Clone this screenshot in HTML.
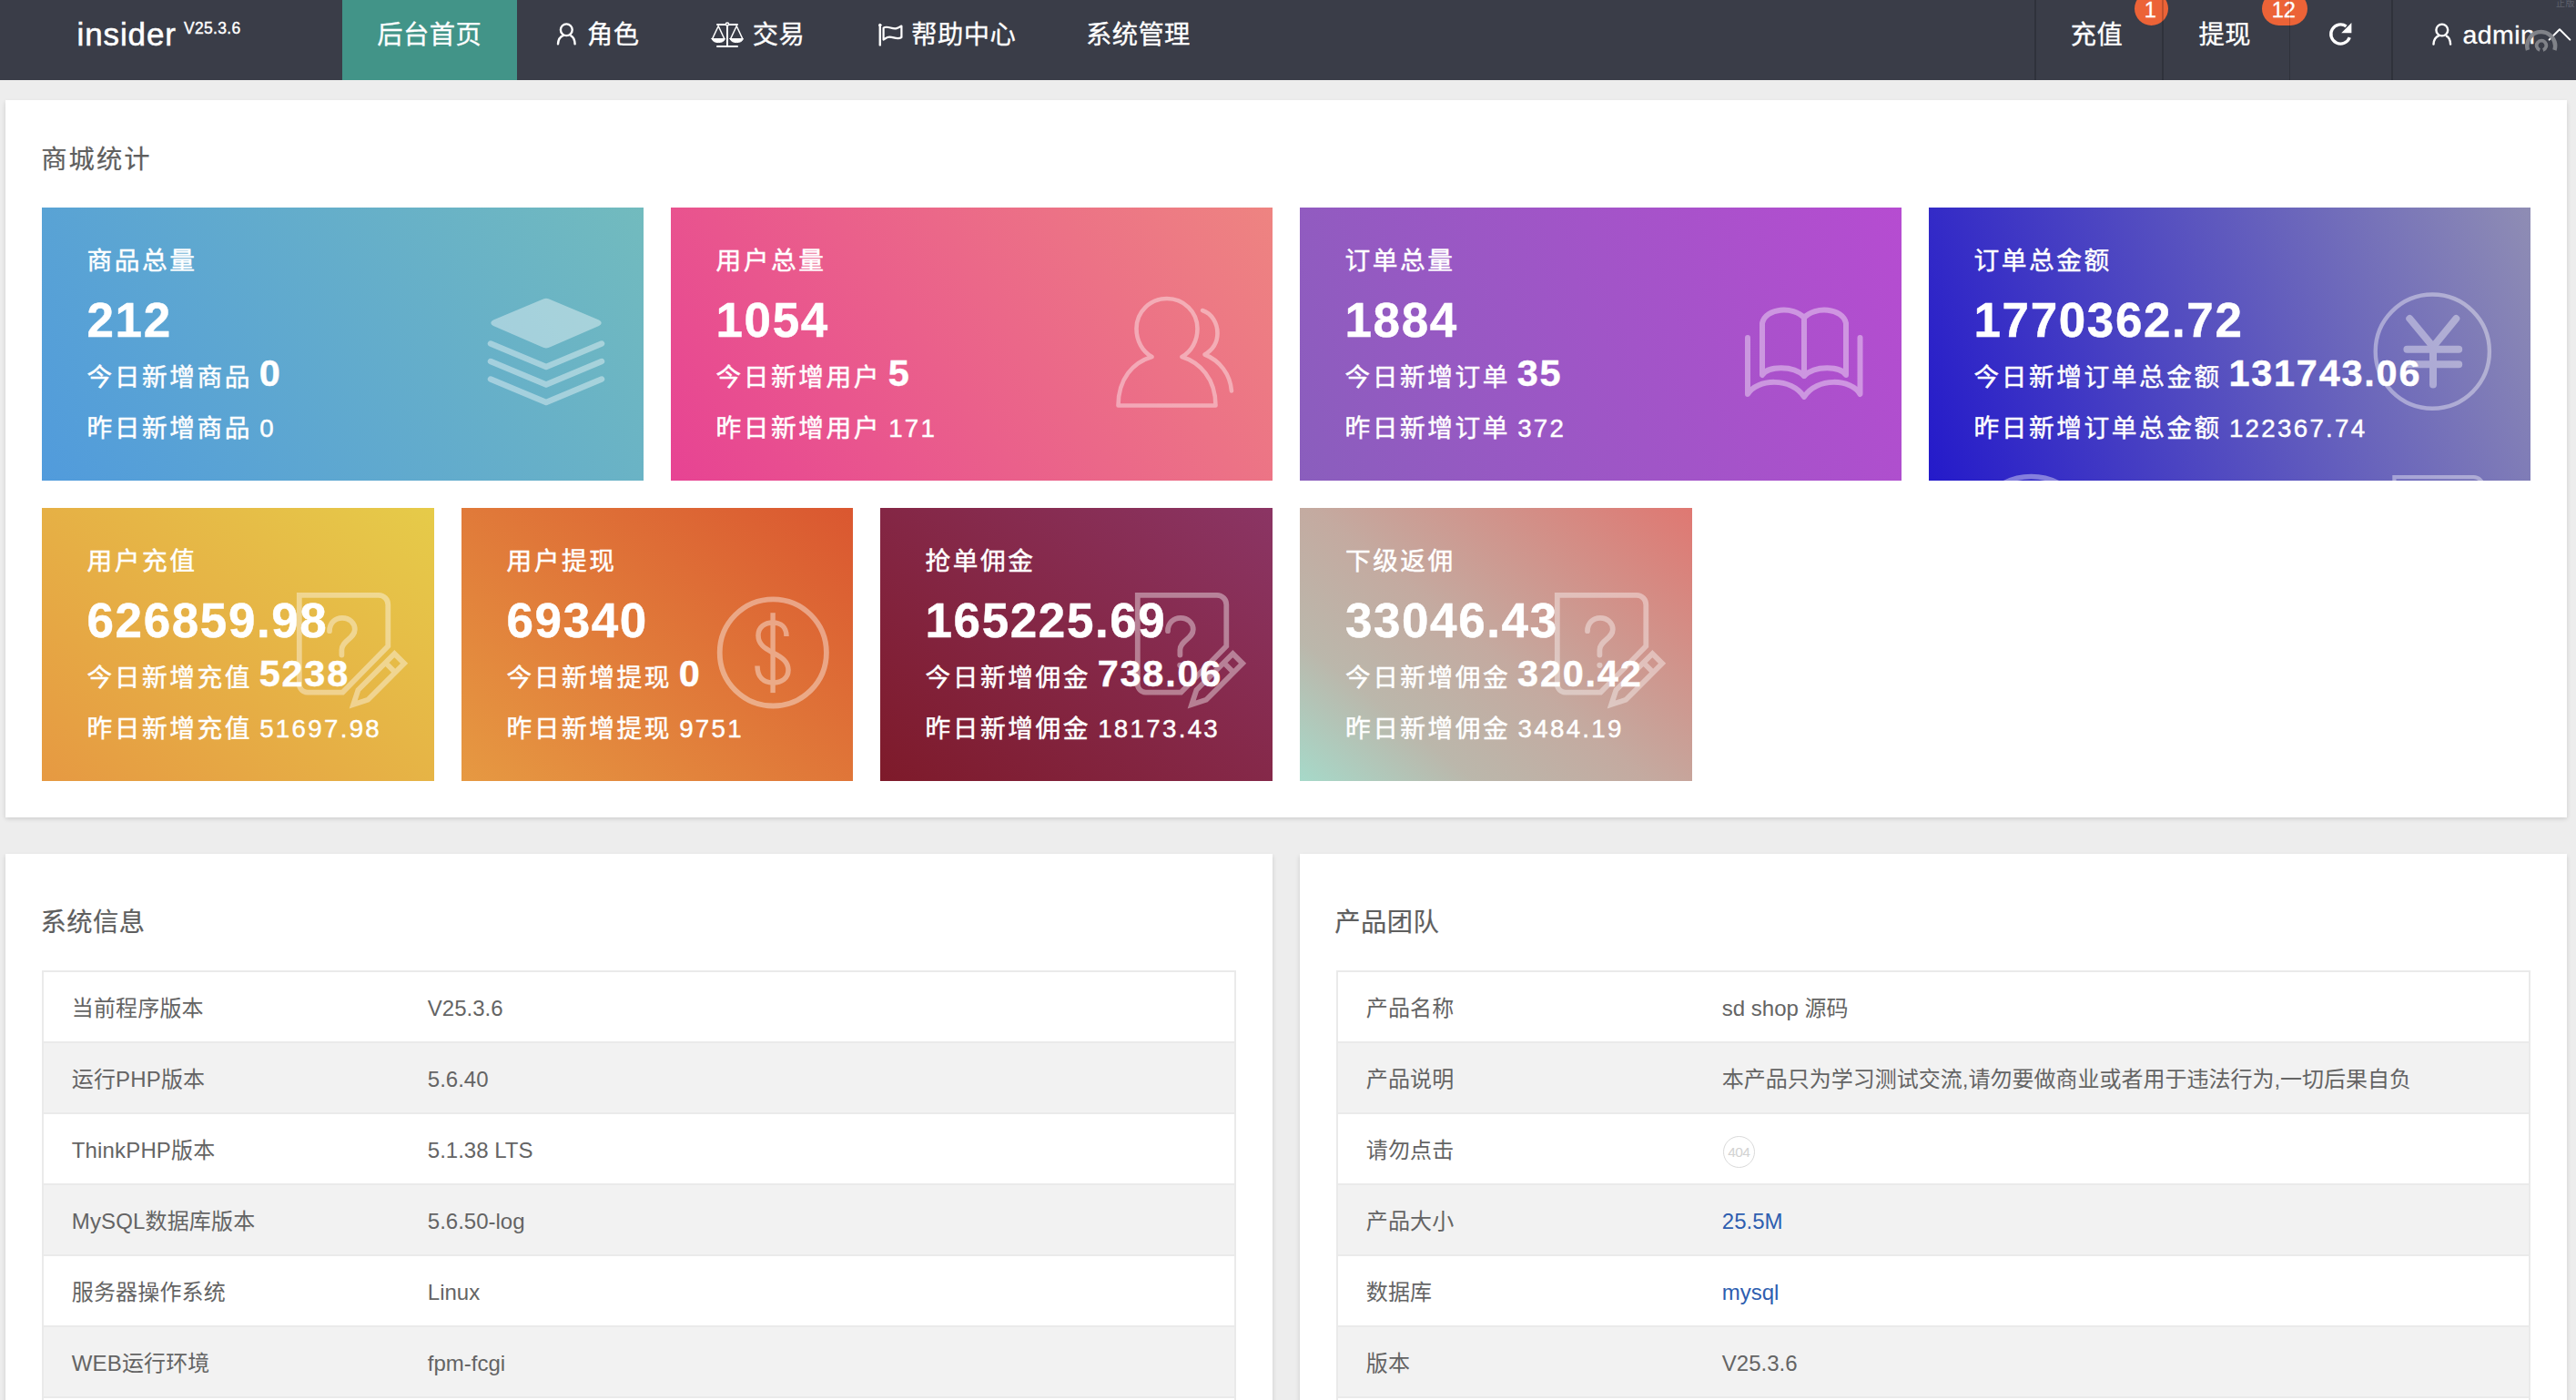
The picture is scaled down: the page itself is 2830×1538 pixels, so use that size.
<!DOCTYPE html>
<html lang="zh-CN">
<head>
<meta charset="utf-8">
<title>insider 后台首页</title>
<style>
*{box-sizing:border-box;margin:0;padding:0}
html,body{width:2830px;height:1538px;overflow:hidden;background:#ededed}
body{position:relative;font-family:"Liberation Sans","Noto Sans CJK SC",sans-serif;color:#5a5a5a}
#hd{position:absolute;left:0;top:0;width:2830px;height:87.5px;background:#3a3d48;overflow:hidden}
#hd .t{position:absolute;white-space:nowrap;color:#fff;-webkit-text-stroke:.3px #fff;font-size:28.3px;letter-spacing:.4px;line-height:40px;top:18.3px}
#hd .act{position:absolute;left:375.75px;top:0;width:192.25px;height:87.5px;background:#429488}
#hd .dv{position:absolute;top:0;width:1.6px;height:87.5px;background:rgba(0,0,0,.18);z-index:3}
#hd .bdg{position:absolute;top:-8.7px;height:37px;border-radius:18.5px;background:#ec6337;color:#fff;font-size:23.6px;line-height:40.6px;text-align:center;-webkit-text-stroke:.3px #fff;padding-right:2.4px}
#hd svg{position:absolute;left:0;top:0;overflow:visible}
.pn{position:absolute;background:#fff;box-shadow:0 1.5px 5px rgba(0,0,0,.14)}
.ttl{position:absolute;white-space:nowrap;font-size:28.3px;letter-spacing:.4px;line-height:40px;color:#5e5e5e;-webkit-text-stroke:.2px #5e5e5e}
.cd{position:absolute;height:299.5px;overflow:hidden;color:#fff;-webkit-text-stroke:.45px #fff}
.cd .l{position:absolute;left:49.5px;white-space:nowrap;font-size:27.7px;letter-spacing:2.55px;line-height:40px}
.cd .l1{top:39px}
.cd .l2{top:94px;font-size:53px;line-height:60px;font-weight:bold;letter-spacing:1.6px}
.cd .l3{top:161.7px;word-spacing:-2.5px}
.cd .l3 b{font-size:41.4px;letter-spacing:1.8px;line-height:40px}
.cd .l4{top:222.7px;word-spacing:-2px}
.cd .l4 i{font-style:normal;letter-spacing:2.3px}
.cd svg{position:absolute;left:0;top:0;overflow:visible}
.tb{position:absolute;border:2px solid #eaeaea;border-bottom:none;overflow:hidden}
.tb .r{position:absolute;left:0;width:100%;height:78px;border-bottom:2px solid #eaeaea;font-size:24px;letter-spacing:.15px;line-height:79.2px;color:#646464}
.tb .r.g{background:#f2f2f2}
.tb .r span{position:absolute;top:0;white-space:nowrap}
.tb .r .k{left:30.6px}
.tb .r .v{left:421.6px;letter-spacing:0}
.tb .r .v.a{color:#2e5eb0}
.c404{position:absolute;left:422.6px;top:23.8px;width:35px;height:35px;border:1px solid #dadada;border-radius:50%;font-size:15.5px;line-height:34.6px;text-align:center;color:#d2d2d2;letter-spacing:-.6px;-webkit-text-stroke:0}
</style>
</head>
<body>

<div id="hd">
  <div class="act"></div>
  <div class="t" id="logo" style="left:84.5px;font-size:35px;letter-spacing:.9px;top:17.5px;-webkit-text-stroke:.55px #fff">insider</div>
  <div class="t" id="ver" style="left:202px;font-size:17.5px;letter-spacing:.3px;top:11.3px;-webkit-text-stroke:.4px #fff">V25.3.6</div>
  <div class="t" id="n1" style="left:414.3px">后台首页</div>
  <div class="t" id="n2" style="left:645px">角色</div>
  <div class="t" id="n3" style="left:826.8px">交易</div>
  <div class="t" id="n4" style="left:1001.3px">帮助中心</div>
  <div class="t" id="n5" style="left:1193px">系统管理</div>
  <div class="dv" style="left:2235.3px"></div>
  <div class="t" id="n6" style="left:2274.8px">充值</div>
  <div class="bdg" id="b1" style="left:2345px;width:37px">1</div>
  <div class="dv" style="left:2375.3px"></div>
  <div class="t" id="n7" style="left:2415.5px">提现</div>
  <div class="bdg" id="b2" style="left:2485px;width:50px">12</div>
  <div class="dv" style="left:2514.5px"></div>
  <div class="dv" style="left:2627.3px"></div>
  <div class="t" id="n8" style="left:2705.6px;font-size:28.5px;top:17.9px">admin</div>
  <div class="t" id="wm" style="left:2808px;top:-1.6px;font-size:10px;line-height:12px;color:#5f626d;-webkit-text-stroke:0">正版</div>
  <svg width="2830" height="88" viewBox="0 0 2830 88" fill="none" stroke="#fff" stroke-linecap="round" stroke-linejoin="round">
    <circle cx="622.30" cy="32.75" r="6.40" stroke-width="2.40"/><path d="M613.00 48.35 C613.30 43.05 616.00 40.05 619.00 38.95" stroke-width="2.40"/><path d="M631.60 48.35 C631.30 43.05 629.60 40.45 627.30 39.35" stroke-width="2.40"/>
<circle cx="2682.80" cy="33.00" r="6.40" stroke-width="2.40"/><path d="M2673.50 48.60 C2673.80 43.30 2676.50 40.30 2679.50 39.20" stroke-width="2.40"/><path d="M2692.10 48.60 C2691.80 43.30 2690.10 40.70 2687.80 39.60" stroke-width="2.40"/>
<g stroke-width="2">
<path d="M788 27H810M799 27V51M788 51H810"/>
<circle cx="799" cy="26.6" r="1.6" fill="#3a3d48" stroke-width="1.6"/>
<path d="M782.6 42.6L789.2 28.6L795.8 42.6" stroke-width="1.4"/>
<path d="M802.6 42.6L809.2 28.6L815.8 42.6" stroke-width="1.4"/>
<path d="M782 42.6H796.4C795.6 45.6 792.6 46.6 789.2 46.6C785.8 46.6 782.8 45.6 782 42.6Z" fill="#fff" stroke-width="1"/>
<path d="M802 42.6H816.4C815.6 45.6 812.6 46.6 809.2 46.6C805.8 46.6 802.8 45.6 802 42.6Z" fill="#fff" stroke-width="1"/>
</g>
<g stroke-width="2.2">
<path d="M966.8 28V49.4" stroke-width="2.4"/>
<circle cx="966.8" cy="27.6" r="1.3" fill="#fff" stroke-width="1"/>
<path d="M970.6 30.6C975 27.6 980 32.6 985 31.1C987.5 30.4 989 29.1 990.4 28.6V41C985 44.5 980 39 975 41C973 41.8 971.6 43 970.6 43.5Z"/>
</g>
<g>
<g transform="translate(0 -2.4)"><path d="M2577.6 31.3A10.6 10.6 0 1 0 2581.3 43.6" stroke-width="3.3" stroke-linecap="butt"/>
<path d="M2583.4 27.4V38.6H2572.2Z" fill="#fff" stroke="none"/></g>
</g>
<path d="M2800.6 43.6L2812 32.2L2823.4 43.6" stroke-width="2"/>
<g stroke="#84868c" stroke-linecap="butt" opacity=".95">
<path d="M2776.97 55A15.4 15.4 0 1 1 2806.43 55" stroke-width="4.5"/>
<path d="M2790.24 55A5.3 5.3 0 1 1 2793.76 55" stroke-width="3.8"/>
</g>
  </svg>
</div>

<div class="pn" id="p1" style="left:6px;top:109.5px;width:2814px;height:788.5px"></div>
<div class="ttl" id="t1" style="left:45.3px;top:154.5px;letter-spacing:2px">商城统计</div>
<div class="cd" id="c1" style="left:46px;top:228px;width:660.5px;background:linear-gradient(-125deg,#72bbbe,#519bdc)">
<svg width="660.5" height="300"><g transform="translate(474.00 88.00)" fill="none" stroke="#fff" opacity=".4" stroke-linecap="round" stroke-linejoin="round" stroke-width="6.5">
<path d="M75 13.2Q80 10.2 85 13.2L138 35.4Q143.5 38.6 138 41.9L85 65.1Q80 67.9 75 65.1L22 41.9Q16.5 38.6 22 35.4Z" fill="#fff" stroke="none"/>
<path d="M19 61.5L80 87L141 61.5"/>
<path d="M19 81L80 106.5L141 81"/>
<path d="M19 100.5L80 126L141 100.5"/>
</g></svg>
<div class="l l1">商品总量</div>
<div class="l l2">212</div>
<div class="l l3">今日新增商品 <b>0</b></div>
<div class="l l4">昨日新增商品 <i>0</i></div>
</div>
<div class="cd" id="c2" style="left:737px;top:228px;width:660.5px;background:linear-gradient(-125deg,#ee8481,#e74393)">
<svg width="660.5" height="300"><g transform="translate(473.00 88.00)" fill="none" stroke="#fff" opacity=".4" stroke-linecap="round" stroke-linejoin="round" stroke-width="4.6">
<path d="M18.5 129.5C18.5 100 35 82 55.5 76C45 70 38.5 58.5 38.5 45C38.5 26.5 53.5 12 72 12C90.5 12 105.5 26.5 105.5 45C105.5 58.5 99 70 88.5 76C108 82 125.5 100 125.5 129.5Z"/>
<path d="M111 25C121.5 28.5 127.5 39 127.5 50C127.5 60 122 68.5 113.5 73.5C130 80 141.5 95 143 113.5"/>
</g></svg>
<div class="l l1">用户总量</div>
<div class="l l2">1054</div>
<div class="l l3">今日新增用户 <b>5</b></div>
<div class="l l4">昨日新增用户 <i>171</i></div>
</div>
<div class="cd" id="c3" style="left:1428px;top:228px;width:660.5px;background:linear-gradient(-113deg,#b64cd1,#8a5ebd)">
<svg width="660.5" height="300"><g transform="translate(472.00 88.00)" fill="none" stroke="#fff" opacity=".4" stroke-linecap="round" stroke-linejoin="round" stroke-width="6">
<path d="M36 96V39C40 22 70 20 82 33C94 20 124 22 128 39V96C122 86 94 85 82 97C70 85 42 86 36 96Z"/>
<path d="M82 33V97"/>
<path d="M20 55V117C30 100 68 98 82 120C96 98 134 100 143.5 117V55"/>
</g></svg>
<div class="l l1">订单总量</div>
<div class="l l2">1884</div>
<div class="l l3">今日新增订单 <b>35</b></div>
<div class="l l4">昨日新增订单 <i>372</i></div>
</div>
<div class="cd" id="c4" style="left:2119px;top:228px;width:660.5px;background:linear-gradient(-110deg,#8f8db4,#241aca)">
<svg width="660.5" height="300"><g transform="translate(-2119.00 -228.00)" fill="none" stroke="#fff" opacity=".4" stroke-linecap="round" stroke-linejoin="round">
<title>¥</title><circle cx="2672.3" cy="386.1" r="62.6" stroke-width="4.4"/>
<path d="M2647.3 350L2673 381L2698.3 350M2673 381V422.5M2644.4 383.7H2701.2M2644.4 400.3H2701.2" stroke-width="8"/>
<circle cx="2231.5" cy="587.5" r="64" stroke-width="5.5"/>
</g><g transform="translate(492.60 282.20)" fill="none" stroke="#fff" opacity=".4" stroke-width="4.2" stroke-linejoin="miter"><title>?</title>
<path d="M18.8 13.9H106A10.3 10.3 0 0 1 116.3 24.2V69.7L66.5 120.6H27.8A9 9 0 0 1 18.8 111.6Z"/>
<path d="M52 53.2C52 44.5 58 38.8 66 38.8C74 38.8 79.8 44.4 79.8 51.6C79.8 61.5 65.4 63.5 65.4 74V79.5" stroke-linecap="round"/>
<circle cx="65.4" cy="90.8" r="3.1" fill="#fff" stroke="none"/>
<g transform="translate(75 137.2) rotate(-45)">
<path d="M4.5 0L19.5 -7.6H76V7.6H19.5ZM62 -7.6V7.6"/>
</g>
</g></svg>
<div class="l l1">订单总金额</div>
<div class="l l2">1770362.72</div>
<div class="l l3">今日新增订单总金额 <b>131743.06</b></div>
<div class="l l4">昨日新增订单总金额 <i>122367.74</i></div>
</div>
<div class="cd" id="c5" style="left:46px;top:558px;width:430.5px;background:linear-gradient(-141deg,#e6cb49,#e69942)">
<svg width="430.5" height="300"><g transform="translate(264.00 82.00)" fill="none" stroke="#fff" opacity=".4" stroke-width="5.8" stroke-linejoin="miter"><title>?</title>
<path d="M18.8 13.9H106A10.3 10.3 0 0 1 116.3 24.2V69.7L66.5 120.6H27.8A9 9 0 0 1 18.8 111.6Z"/>
<path d="M52 53.2C52 44.5 58 38.8 66 38.8C74 38.8 79.8 44.4 79.8 51.6C79.8 61.5 65.4 63.5 65.4 74V79.5" stroke-linecap="round"/>
<circle cx="65.4" cy="90.8" r="3.1" fill="#fff" stroke="none"/>
<g transform="translate(75 137.2) rotate(-45)">
<path d="M4.5 0L19.5 -7.6H76V7.6H19.5ZM62 -7.6V7.6"/>
</g>
</g></svg>
<div class="l l1">用户充值</div>
<div class="l l2">626859.98</div>
<div class="l l3">今日新增充值 <b>5238</b></div>
<div class="l l4">昨日新增充值 <i>51697.98</i></div>
</div>
<div class="cd" id="c6" style="left:507px;top:558px;width:430.2px;background:linear-gradient(-141deg,#da5730,#e69942)">
<svg width="430.2" height="300"><g transform="translate(263.00 82.00)" fill="none" stroke="#fff" opacity=".4" stroke-linejoin="round">
<title>$</title><circle cx="79.3" cy="76.9" r="58.6" stroke-width="5.8"/>
<path d="M79.1 33.2V121.1" stroke-width="5.4"/>
<path d="M94 59C94 49 88 44 79 44C70 44 63 49 63 58C63 68 70 72 79 77C89 82 96 87 96 96C96 105 89 110 79 110C69 110 62 104 62 91.5" stroke-width="5.5"/>
</g></svg>
<div class="l l1">用户提现</div>
<div class="l l2">69340</div>
<div class="l l3">今日新增提现 <b>0</b></div>
<div class="l l4">昨日新增提现 <i>9751</i></div>
</div>
<div class="cd" id="c7" style="left:967px;top:558px;width:431px;background:linear-gradient(-141deg,#8b3564,#7e1a2a)">
<svg width="431" height="300"><g transform="translate(264.00 82.00)" fill="none" stroke="#fff" opacity=".4" stroke-width="5.8" stroke-linejoin="miter"><title>?</title>
<path d="M18.8 13.9H106A10.3 10.3 0 0 1 116.3 24.2V69.7L66.5 120.6H27.8A9 9 0 0 1 18.8 111.6Z"/>
<path d="M52 53.2C52 44.5 58 38.8 66 38.8C74 38.8 79.8 44.4 79.8 51.6C79.8 61.5 65.4 63.5 65.4 74V79.5" stroke-linecap="round"/>
<circle cx="65.4" cy="90.8" r="3.1" fill="#fff" stroke="none"/>
<g transform="translate(75 137.2) rotate(-45)">
<path d="M4.5 0L19.5 -7.6H76V7.6H19.5ZM62 -7.6V7.6"/>
</g>
</g></svg>
<div class="l l1">抢单佣金</div>
<div class="l l2">165225.69</div>
<div class="l l3">今日新增佣金 <b>738.06</b></div>
<div class="l l4">昨日新增佣金 <i>18173.43</i></div>
</div>
<div class="cd" id="c8" style="left:1428.4px;top:558px;width:430.6px;background:linear-gradient(-141deg,#df7872,#c4aaa0 52%,#bbb7ab 76%,#a6d9c9)">
<svg width="430.6" height="300"><g transform="translate(264.00 82.00)" fill="none" stroke="#fff" opacity=".4" stroke-width="5.8" stroke-linejoin="miter"><title>?</title>
<path d="M18.8 13.9H106A10.3 10.3 0 0 1 116.3 24.2V69.7L66.5 120.6H27.8A9 9 0 0 1 18.8 111.6Z"/>
<path d="M52 53.2C52 44.5 58 38.8 66 38.8C74 38.8 79.8 44.4 79.8 51.6C79.8 61.5 65.4 63.5 65.4 74V79.5" stroke-linecap="round"/>
<circle cx="65.4" cy="90.8" r="3.1" fill="#fff" stroke="none"/>
<g transform="translate(75 137.2) rotate(-45)">
<path d="M4.5 0L19.5 -7.6H76V7.6H19.5ZM62 -7.6V7.6"/>
</g>
</g></svg>
<div class="l l1">下级返佣</div>
<div class="l l2">33046.43</div>
<div class="l l3">今日新增佣金 <b>320.42</b></div>
<div class="l l4">昨日新增佣金 <i>3484.19</i></div>
</div>
<div class="pn" id="p2" style="left:6px;top:937.5px;width:1392px;height:620px"></div>
<div class="pn" id="p3" style="left:1428px;top:937.5px;width:1392px;height:620px"></div>
<div class="ttl" id="t2" style="left:44.6px;top:992.5px">系统信息</div>
<div class="ttl" id="t3" style="left:1466.3px;top:992.5px">产品团队</div>
<div class="tb" id="tb1" style="left:46.2px;top:1066.1px;width:1311.5px;height:480px">
<div class="r" style="top:0px"><span class="k">当前程序版本</span><span class="v">V25.3.6</span></div>
<div class="r g" style="top:78px"><span class="k">运行PHP版本</span><span class="v">5.6.40</span></div>
<div class="r" style="top:156px"><span class="k">ThinkPHP版本</span><span class="v">5.1.38 LTS</span></div>
<div class="r g" style="top:234px"><span class="k">MySQL数据库版本</span><span class="v">5.6.50-log</span></div>
<div class="r" style="top:312px"><span class="k">服务器操作系统</span><span class="v">Linux</span></div>
<div class="r g" style="top:390px"><span class="k">WEB运行环境</span><span class="v">fpm-fcgi</span></div>
<div class="r" style="top:468px"><span class="k">上传大小限制</span><span class="v">2M</span></div>
</div>
<div class="tb" id="tb2" style="left:1468.2px;top:1066.1px;width:1311.5px;height:480px">
<div class="r" style="top:0px"><span class="k">产品名称</span><span class="v">sd shop 源码</span></div>
<div class="r g" style="top:78px"><span class="k">产品说明</span><span class="v">本产品只为学习测试交流,请勿要做商业或者用于违法行为,一切后果自负</span></div>
<div class="r" style="top:156px"><span class="k">请勿点击</span><div class="c404">404</div></div>
<div class="r g" style="top:234px"><span class="k">产品大小</span><span class="v a">25.5M</span></div>
<div class="r" style="top:312px"><span class="k">数据库</span><span class="v a">mysql</span></div>
<div class="r g" style="top:390px"><span class="k">版本</span><span class="v">V25.3.6</span></div>
<div class="r" style="top:468px"><span class="k">其他</span><span class="v">-</span></div>
</div>
<script>(function(){var r=window.innerWidth/2830;if(r>0&&Math.abs(r-1)>0.01){document.documentElement.style.zoom=r;}})();</script>
</body>
</html>
